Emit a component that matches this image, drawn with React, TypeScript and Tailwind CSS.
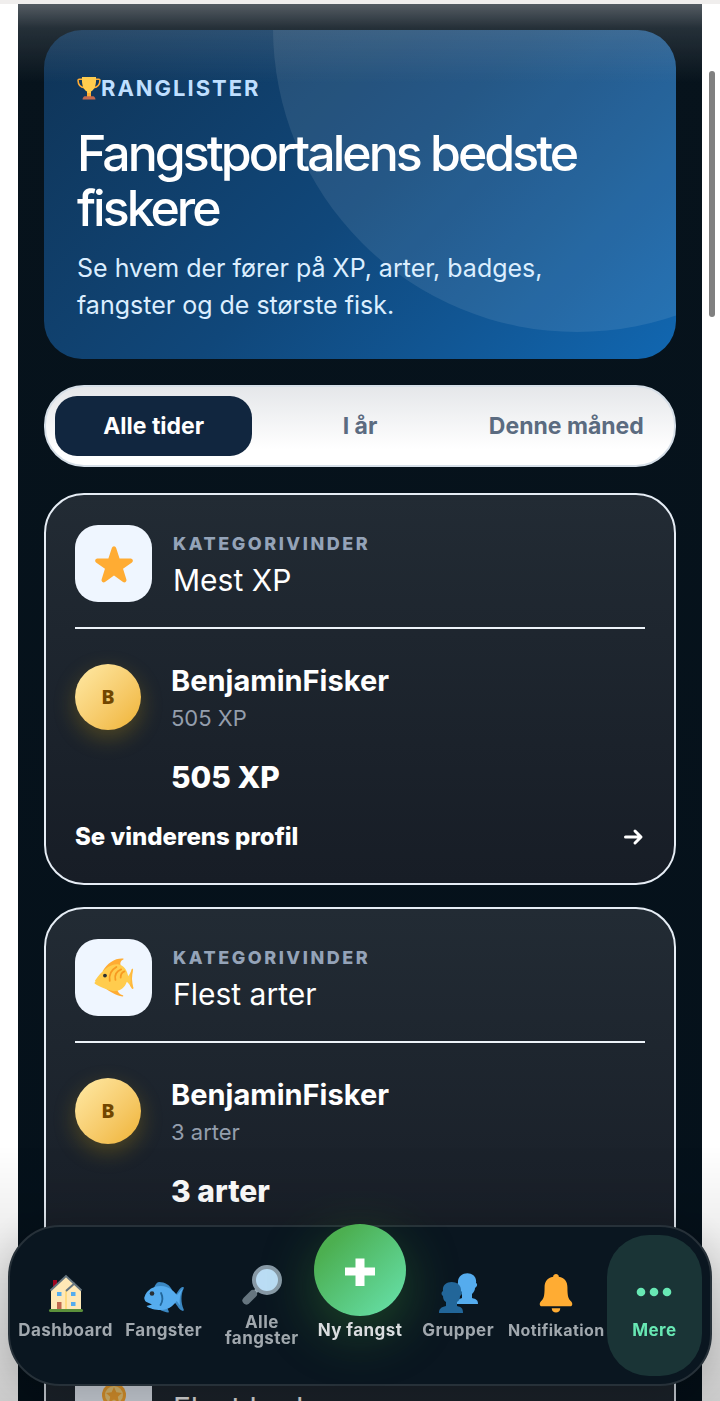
import React from "react";

type IconProps = { className?: string };

const Trophy = ({ className }: IconProps) => (
  <svg viewBox="0 0 24 24" className={className} aria-hidden="true">
    <path d="M6 3.200H2.200c-.9 0-1.200.6-1.200 1.300.2 4 2 6.700 6.400 7.200M18 3.200h3.800c.9 0 1.200.6 1.200 1.300-.2 4-2 6.700-6.400 7.200" fill="none" stroke="#ffac33" strokeWidth="1.600" />
    <path d="M5 1h14c.5 8-1.300 12.500-5 14.500V20h-4v-4.500C6.300 13.500 4.500 9 5 1z" fill="#ffcc4d" />
    <path d="M10 17h4v4h-4z" fill="#ffac33" />
    <path d="M7.500 20.300h9c1 .6 1.900 1.800 2 3.200h-13c.1-1.400 1-2.600 2-3.200z" fill="#c1694f" />
  </svg>
);

const Star = ({ className }: IconProps) => (
  <svg viewBox="0 0 36 36" className={className} aria-hidden="true">
    <path
      fill="#ffac33"
      d="M27.287 34.627c-.404 0-.806-.124-1.152-.371L18 28.422l-8.135 5.834a1.970 1.970 0 0 1-2.312-.008 1.971 1.971 0 0 1-.721-2.194l3.034-9.792-8.062-5.681a1.980 1.980 0 0 1-.708-2.203 1.978 1.978 0 0 1 1.866-1.363L12.947 13l3.179-9.549a1.976 1.976 0 0 1 3.749 0L23 13l10.036.015a1.975 1.975 0 0 1 1.159 3.566l-8.062 5.681 3.034 9.792a1.970 1.970 0 0 1-.72 2.194 1.957 1.957 0 0 1-1.160.379z"
    />
  </svg>
);

const TropicalFish = ({ className }: IconProps) => (
  <svg viewBox="0 0 42 42" className={className} aria-hidden="true">
    <path d="M9 14C14 5 22 0 30.500.5c.8 0 .8.800.2 1.200C28 3 27 5 28 8zM11 31c5 4 12 8.500 19 9.500 1 0 1-1 .2-1.300-3-1-5-3-6-6.200z" fill="#ffac33" />
    <path d="M35 20c2-2 3.500-5 4.500-8 .4-1 1.700-.7 1.500.3-1.500 6-1.500 13 .3 19 .3 1-.8 1.700-1.500.8-2-3-3.500-6-6.300-7.600z" fill="#ffcc4d" />
    <path d="M38 17l1.500-5c.4-1 1.700-.7 1.500.3-1.500 6-1.500 13 .3 19 .3 1-.8 1.700-1.500.8l-2-3c.8-4 .8-8 .2-12.100z" fill="#ffac33" opacity=".6" />
    <path d="M1 24C8 13 17 6 25 6.500c6 .5 10 6 11 13.500l-1.500 5c-2 6-7 10-13.500 10C12 33 5 29.500 1 27c-.8-.8-.4-1.500.6-1.800z" fill="#ffcc4d" />
    <path d="M16.500 24c-1-6 1-11 7-14.500M22.500 23c-1-5 1-9 6-11M28 20.500c0-3 1-5.500 4-6.500" stroke="#f79a21" strokeWidth="1.900" strokeLinecap="round" fill="none" />
    <circle cx="11.500" cy="18.500" r="2" fill="#292f33" />
  </svg>
);

const Medal = ({ className }: IconProps) => (
  <svg viewBox="0 0 40 40" className={className} aria-hidden="true">
    <path d="M10 0h20v7l-6 5h-8l-6-5z" fill="#55acee" />
    <circle cx="20" cy="23" r="12" fill="#ffac33" />
    <circle cx="20" cy="23" r="9" fill="#ffd983" />
    <path d="M20 15l2.400 5.300 5.600.6-4.200 3.900 1.200 5.700-5-2.900-5 2.900 1.200-5.700-4.200-3.900 5.600-.6z" fill="#ffac33" />
  </svg>
);

const House = ({ className }: IconProps) => (
  <svg viewBox="0 0 40 40" className={className} aria-hidden="true">
    <path d="M7 7h4v9H7z" fill="#a0041e" />
    <path d="M5 17L20 3l15 14v20H5z" fill="#ffe8b6" />
    <path d="M20 18v18" stroke="#ffcc4d" strokeWidth="1" />
    <path d="M4.500 17.500L20 3l15.500 14.500M20 18l9-8" fill="none" stroke="#66757f" strokeWidth="2" />
    <path d="M11 19h4.500v4H11zM25 19h4.500v4H25zM25 29h4.500v4H25z" fill="#55acee" />
    <path d="M11 29h4.500v8H11z" fill="#c1694f" />
    <rect x="3" y="36" width="34" height="3" rx="1.500" fill="#5c913b" />
  </svg>
);

const Fish = ({ className }: IconProps) => (
  <svg viewBox="0 0 40 40" className={className} aria-hidden="true">
    <path d="M10 15c1-3 3-6 5-6 6 0 11 3 13 8zM13 34c2 3 7 5 11 5.500 1 0 1-.7.6-1.500L23 34z" fill="#3b88c3" />
    <path d="M30 24c3-3 5-9 8.500-10 1.200-.3 1.800.5 1.200 1.500-3 6-3 14 0 21 .4 1-.4 1.600-1.400 1.300C34 36 33 31 29 28z" fill="#3b88c3" />
    <path d="M.3 24.500C3 16 10 13 17 13c8 0 13 5 18 11.500-4 7-10 12.500-18 12.500-6 0-12-1.500-14.500-4L8 31.500l-6-2.700c-1-1-2-3-1.700-4.300z" fill="#55acee" />
    <path d="M33 22c2-2 4-5 6-6.500-3 5-4 11-3 17-1.500-2-3-4.500-5-6z" fill="#55acee" />
    <path d="M17 20c2 4 2 8-.5 12" fill="none" stroke="#226699" strokeWidth="1.800" strokeLinecap="round" />
    <circle cx="8" cy="20.500" r="2.300" fill="#292f33" />
  </svg>
);

const Magnifier = ({ className }: IconProps) => (
  <svg viewBox="0 0 40 40" className={className} aria-hidden="true">
    <path d="M12 28l6-6" stroke="#9aaab4" strokeWidth="4" />
    <path d="M4.500 35.500l6.500-6.500" stroke="#66757f" strokeWidth="8" strokeLinecap="round" />
    <circle cx="25" cy="15" r="13" fill="#bbddf5" stroke="#8899a6" strokeWidth="4" />
  </svg>
);

const Busts = ({ className }: IconProps) => (
  <svg viewBox="0 0 40 40" className={className} aria-hidden="true">
    <path d="M18 31c1-4 4-5 7-6v-4c-2-2-3-4-3-7-2-1-2-3-1-4-1-13 20-13 18 0 2 1 1 4-1 5 0 2-1 4-3 6v4c4 1 6 2 6 6z" transform="translate(-1 0)" fill="#55acee" />
    <path d="M1 40c0-4 2-6 7-7v-4c-2-1-3-3-3-6-2-1-2-4 0-5C3 6 24 6 23 18c2 1 1 4-1 5 0 3-1 5-3 6v4c4 1 6 2 6 7z" fill="#226699" />
  </svg>
);

const Bell = ({ className }: IconProps) => (
  <svg viewBox="0 0 40 42" className={className} aria-hidden="true">
    <path d="M17 4c0-4 6-4 6 0 6 1 9 5 9 11 0 10 1 12 4 15 2 2 1 5-1 5H5c-2 0-3-3-1-5 3-3 4-5 4-15C8 9 11 5 17 4zM15.500 37h9c0 6-9 6-9 0z" fill="#ffac33" />
  </svg>
);

const Dots = ({ className }: IconProps) => (
  <svg viewBox="0 0 40 40" className={className} aria-hidden="true" fill="currentColor">
    <circle cx="7" cy="19" r="4.300" />
    <circle cx="20" cy="19" r="4.300" />
    <circle cx="33" cy="19" r="4.300" />
  </svg>
);

type Category = { title: string; score: string; Icon: React.ComponentType<IconProps> };

const categories: Category[] = [
  { title: "Mest XP", score: "505 XP", Icon: Star },
  { title: "Flest arter", score: "3 arter", Icon: TropicalFish },
  { title: "Flest badges", score: "3 badges", Icon: Medal },
];

function WinnerCard({ title, score, Icon }: Category) {
  return (
    <article className="rounded-[40px] border-2 border-[#e6edf5] bg-linear-to-b from-[#222b34] to-[#171d26] px-[29px] py-[30px]">
      <header className="flex items-center gap-[21px] border-b-2 border-[#edf3f9] pb-[25px]">
        <div className="flex size-[77px] shrink-0 items-center justify-center rounded-[23px] bg-[#eff6ff]">
          <Icon className="size-10" />
        </div>
        <div>
          <p className="text-[18px] leading-8 font-extrabold tracking-[0.14em] text-[#94a3b8]">KATEGORIVINDER</p>
          <h2 className="text-[30px] leading-10 text-white">{title}</h2>
        </div>
      </header>
      <div className="mt-[35px] flex gap-[30px]">
        <div className="flex size-[66px] shrink-0 items-center justify-center rounded-full bg-linear-to-br from-[#ffeaa5] to-[#efb32f] font-['Noto_Sans'] text-[20px] font-extrabold text-[#714600] shadow-[0_8px_22px_rgba(234,179,8,0.25)]">
          B
        </div>
        <div>
          <p className="text-[29px] leading-[34px] font-bold text-white">BenjaminFisker</p>
          <p className="mt-1 text-[22px] leading-8 text-[#949eac]">{score}</p>
          <p className="mt-[23px] text-[30px] leading-10 font-extrabold text-white">{score}</p>
        </div>
      </div>
      <a href="#profil" className="mt-6 flex items-center justify-between text-[24px] leading-8 font-extrabold text-white">
        Se vinderens profil
        <svg viewBox="0 0 24 24" className="size-6" fill="none" stroke="currentColor" strokeWidth="3" strokeLinecap="round" strokeLinejoin="round" aria-hidden="true">
          <path d="M4.500 12h15M14 6l6 6-6 6" />
        </svg>
      </a>
    </article>
  );
}

const navLeft = [
  { label: "Dashboard", Icon: House },
  { label: "Fangster", Icon: Fish },
  { label: "Alle fangster", Icon: Magnifier },
];
const navRight = [
  { label: "Grupper", Icon: Busts },
  { label: "Notifikation", Icon: Bell, compact: true },
];

function NavItem({ label, Icon, compact }: { label: string; Icon: React.ComponentType<IconProps>; compact?: boolean }) {
  return (
    <a href="#nav" className="flex min-w-0 flex-col items-center justify-center gap-[9px] text-[#a1a8ae]">
      <Icon className="h-10 w-10" />
      <span className={compact ? "text-center text-[16px] leading-4" : "text-center leading-4"}>{label}</span>
    </a>
  );
}

export default function App() {
  return (
    <div className="relative h-screen overflow-hidden bg-white font-['Inter','Liberation_Sans',sans-serif]">
      <div className="h-full overflow-y-auto bg-white [scrollbar-width:none]">
        <div className="border-t-4 border-[#f0eeed] px-[18px]">
          <main className="flex flex-col gap-[26px] bg-linear-to-b from-[#07131c] to-[#04101a] px-[26px] pt-[26px] pb-48">
            <section className="relative overflow-hidden rounded-[38px] bg-linear-135 from-[#0f3457] via-[#10477a] to-[#1167b1] px-[33px] pt-11 pb-[35px]">
              <div className="absolute -top-[306px] -right-[205px] size-[608px] rounded-full bg-white/9" />
              <div className="relative">
                <p className="flex items-center text-[22px] leading-7 font-bold tracking-[0.09em] text-[#bfdfff]">
                  <Trophy className="size-6" />
                  RANGLISTER
                </p>
                <h1 className="mt-6 text-[50px] leading-[55px] font-medium tracking-[-0.06em] text-white">
                  Fangstportalens bedste fiskere
                </h1>
                <p className="mt-[14px] max-w-[500px] text-[25px] leading-[37px] text-[#dbeeff]">
                  Se hvem der fører på XP, arter, badges, fangster og de største fisk.
                </p>
              </div>
            </section>

            <div role="group" aria-label="Periode" className="grid grid-cols-3 gap-[9px] rounded-[40px] border-2 border-[#d6dfe8] bg-linear-to-b from-[#e5e7ea] to-white to-80% p-[9px] text-[23px] leading-[60px] font-bold text-[#5b6b80]">
              <button type="button" aria-pressed="true" className="rounded-[22px] bg-[#11263f] text-white">Alle tider</button>
              <button type="button" aria-pressed="false">I år</button>
              <button type="button" aria-pressed="false" className="whitespace-nowrap">Denne måned</button>
            </div>

            <div className="flex flex-col gap-[22px]">
              {categories.map((c) => (
                <WinnerCard key={c.title} {...c} />
              ))}
            </div>
          </main>
        </div>
      </div>

      <div className="pointer-events-none absolute inset-x-[18px] top-1 h-20 bg-linear-to-b from-[#b4b6ba]/45 via-[#a0a6ac]/20 via-30% to-transparent" />
      <div className="pointer-events-none absolute inset-x-0 bottom-0 h-64 bg-linear-to-b from-transparent to-black/20" />
      <div className="absolute top-[71px] right-[5px] h-[246px] w-[6px] rounded-full bg-[#808080]" />

      <nav aria-label="Hovedmenu" className="absolute inset-x-2 bottom-[15px] grid h-[161px] grid-cols-7 gap-[3px] rounded-[52px] border-2 border-[#273139] bg-[#0a1620] p-2 text-[17px] leading-4 font-bold tracking-wide shadow-[0_8px_40px_rgba(0,0,0,0.22)]">
        {navLeft.map((item) => (
          <NavItem key={item.label} {...item} />
        ))}
        <a href="#ny" className="flex min-w-0 flex-col items-center justify-center gap-[9px] text-[#dadddf]">
          <span className="-mt-[49px] -mb-[3px] flex size-[92px] shrink-0 items-center justify-center rounded-full bg-linear-135 from-[#4caf50] from-20% to-[#65dda3] to-90% shadow-[0_16px_54px_rgba(60,150,50,0.4)]">
            <svg viewBox="0 0 32 32" className="size-8" fill="white" aria-hidden="true">
              <path d="M11.500 4.500h9v9H31v8H20.500V32h-9V21.500H1v-8h10.500z" />
            </svg>
          </span>
          <span className="relative whitespace-nowrap">Ny fangst</span>
        </a>
        {navRight.map((item) => (
          <NavItem key={item.label} {...item} />
        ))}
        <a href="#mere" aria-current="page" className="flex min-w-0 flex-col items-center justify-center gap-[9px] rounded-[42px] bg-[#1a3436] text-[#68e8b4]">
          <Dots className="size-10" />
          <span>Mere</span>
        </a>
      </nav>
    </div>
  );
}
